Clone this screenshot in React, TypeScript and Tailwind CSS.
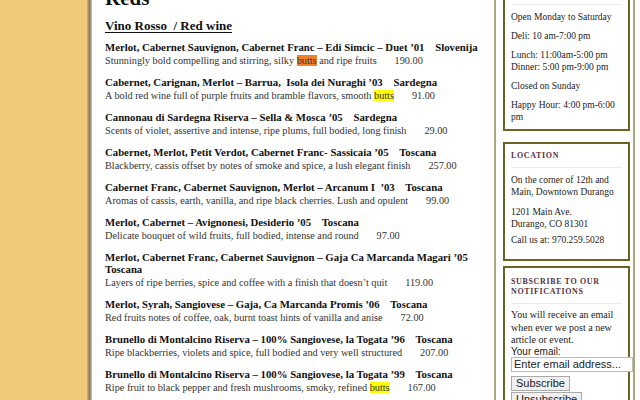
import React from 'react';

type Wine = {
  name: string;
  region: string;
  desc: React.ReactNode;
  price: string;
};

const Hl = ({ color, children }: { color: 'orange' | 'yellow'; children: React.ReactNode }) => (
  <span className={color === 'orange' ? 'bg-[#f2822a]' : 'bg-[#ffff00]'}>{children}</span>
);

const wines: Wine[] = [
  {
    name: 'Merlot, Cabernet Sauvignon, Cabernet Franc – Edi Simcic – Duet ’01',
    region: 'Slovenija',
    desc: (
      <>
        Stunningly bold compelling and stirring, silky <Hl color="orange">butts</Hl> and ripe fruits
      </>
    ),
    price: '190.00',
  },
  {
    name: 'Cabernet, Carignan, Merlot – Barrua,  Isola dei Nuraghi ’03',
    region: 'Sardegna',
    desc: (
      <>
        A bold red wine full of purple fruits and bramble flavors, smooth <Hl color="yellow">butts</Hl>
      </>
    ),
    price: '91.00',
  },
  {
    name: 'Cannonau di Sardegna Riserva – Sella & Mosca ’05',
    region: 'Sardegna',
    desc: 'Scents of violet, assertive and intense, ripe plums, full bodied, long finish',
    price: '29.00',
  },
  {
    name: 'Cabernet, Merlot, Petit Verdot, Cabernet Franc- Sassicaia ’05',
    region: 'Toscana',
    desc: 'Blackberry, cassis offset by notes of smoke and spice, a lush elegant finish',
    price: '257.00',
  },
  {
    name: 'Cabernet Franc, Cabernet Sauvignon, Merlot – Arcanum I  ’03',
    region: 'Toscana',
    desc: 'Aromas of cassis, earth, vanilla, and ripe black cherries. Lush and opulent',
    price: '99.00',
  },
  {
    name: 'Merlot, Cabernet – Avignonesi, Desiderio ’05',
    region: 'Toscana',
    desc: 'Delicate bouquet of wild fruits, full bodied, intense and round',
    price: '97.00',
  },
  {
    name: 'Merlot, Cabernet Franc, Cabernet Sauvignon – Gaja Ca Marcanda Magari ’05',
    region: 'Toscana',
    desc: 'Layers of ripe berries, spice and coffee with a finish that doesn’t quit',
    price: '119.00',
  },
  {
    name: 'Merlot, Syrah, Sangiovese – Gaja, Ca Marcanda Promis ’06',
    region: 'Toscana',
    desc: 'Red fruits notes of coffee, oak, burnt toast hints of vanilla and anise',
    price: '72.00',
  },
  {
    name: 'Brunello di Montalcino Riserva – 100% Sangiovese, la Togata ’96',
    region: 'Toscana',
    desc: 'Ripe blackberries, violets and spice, full bodied and very well structured',
    price: '207.00',
  },
  {
    name: 'Brunello di Montalcino Riserva – 100% Sangiovese, la Togata ’99',
    region: 'Toscana',
    desc: (
      <>
        Ripe fruit to black pepper and fresh mushrooms, smoky, refined <Hl color="yellow">butts</Hl>
      </>
    ),
    price: '167.00',
  },
];

function SideBox({
  title,
  className,
  children,
}: {
  title?: React.ReactNode;
  className?: string;
  children: React.ReactNode;
}) {
  return (
    <div className={`border-2 border-[#6b6322] bg-white px-[6px] ${className ?? ''}`}>
      {title ? (
        <div className="text-[8px] font-bold leading-[9.5px] tracking-[0.08em] text-[#573341] uppercase">
          {title}
        </div>
      ) : null}
      <div className="border-t border-[#ececec]">{children}</div>
    </div>
  );
}

const sideText = 'text-[9.5px] leading-[12.5px] text-[#222]';
const sans = "font-['Liberation_Sans',sans-serif] text-[11px] leading-[13px] text-[#222]";

export default function App() {
  return (
    <div className="flex h-[400px] w-[640px] overflow-hidden bg-[#efc87a] font-['Liberation_Serif',serif]">
      <div className="w-[87px] shrink-0" />
      <div className="w-[5px] shrink-0 bg-gradient-to-r from-[#d9b46e] via-[#8c7b5c] to-[#c9c3b8]" />
      <div className="flex flex-1 bg-white">
        <div className="w-[402px] shrink-0 pl-[13px] pr-[10px]">
          <h2 className="-mt-[14px] text-[21px] font-bold leading-[24px] text-[#111]">Reds</h2>
          <h3 className="mt-[7px] text-[13px] font-bold leading-[18px] text-[#111] underline underline-offset-2 whitespace-pre">
            Vino Rosso  / Red wine
          </h3>
          <div className="mt-[6px]">
            {wines.map((w) => (
              <div key={w.name + w.price} className="mb-[9px]">
                <div className="text-[10.75px] font-bold leading-[12px] text-[#111] whitespace-pre-wrap">
                  {w.name}
                  {'    '}
                  {w.region}
                </div>
                <div className="mt-[2px] text-[10.25px] leading-[12px] text-[#333] whitespace-pre-wrap">
                  {w.desc}
                  {'       '}
                  {w.price}
                </div>
              </div>
            ))}
          </div>
        </div>
        <div className="w-[141px] shrink-0 border-x-2 border-[#aca67c] pl-[7px] pr-[3px]">
          <SideBox className="-mt-[10px] pt-[12px] pb-[5px]">
            <div className={`${sideText} pt-[6px]`}>
              <p className="mb-[6px]">Open Monday to Saturday</p>
              <p className="mb-[6.5px]">Deli: 10 am-7:00 pm</p>
              <p className="mb-[6px]">
                Lunch: 11:00am-5:00 pm
                <br />
                Dinner: 5:00 pm-9:00 pm
              </p>
              <p className="mb-[6.5px]">Closed on Sunday</p>
              <p>Happy Hour: 4:00 pm-6:00 pm</p>
            </div>
          </SideBox>
          <SideBox title={<div className="pt-[7px] pb-[7px]">Location</div>} className="mt-[11px] pb-[13px]">
            <div className={`${sideText} pt-[5.5px]`}>
              <p className="mb-[7px]">On the corner of 12th and Main, Downtown Durango</p>
              <p className="mb-[3px]">
                1201 Main Ave.
                <br />
                Durango, CO 81301
              </p>
              <p>Call us at: 970.259.5028</p>
            </div>
          </SideBox>
          <SideBox
            title={<div className="pt-[9px] pb-[6.5px]">Subscribe to our notifications</div>}
            className="mt-[5px] pb-[8px]"
          >
            <p className="pt-[5.5px] text-[10px] leading-[12.5px] text-[#222]">
              You will receive an email when ever we post a new article or event.
            </p>
            <div className="-mt-[1px] font-['Liberation_Sans',sans-serif] text-[10px] leading-[11px] text-[#222]">
              Your email:
            </div>
            <input
              readOnly
              value="Enter email address..."
              className={`block h-[15px] w-[122px] border border-[#bbb] bg-white px-[2px] outline-none ${sans}`}
            />
            <button className={`mt-[4px] block h-[15px] border border-[#aaa] bg-[#f0f0f0] px-[4px] ${sans}`}>
              Subscribe
            </button>
            <button className={`mt-[1px] block h-[15px] border border-[#aaa] bg-[#f0f0f0] px-[4px] ${sans}`}>
              Unsubscribe
            </button>
          </SideBox>
        </div>
      </div>
    </div>
  );
}
